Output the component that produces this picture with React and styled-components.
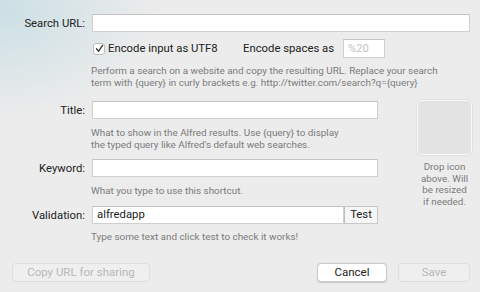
import React from "react";
import styled, { createGlobalStyle } from "styled-components";

const GlobalStyle = createGlobalStyle`
  html, body {
    margin: 0;
    padding: 0;
  }
  body {
    font-family: "Roboto", "Liberation Sans", sans-serif;
    -webkit-font-smoothing: antialiased;
  }
`;

const Window = styled.div`
  width: 480px;
  height: 292px;
  box-sizing: border-box;
  padding-top: 14px;
  background:
    radial-gradient(ellipse 160px 110px at 0 10px, rgba(200, 222, 228, 0.9), rgba(200, 222, 228, 0) 100%),
    #ececec;
  color: #222;
  display: flex;
  flex-direction: column;
  overflow: hidden;
`;

const Row = styled.div`
  display: flex;
  align-items: center;
  height: 18px;
  margin-top: ${(p) => p.$top || 0}px;
`;

const Label = styled.label`
  width: 85px;
  flex: none;
  text-align: right;
  font-size: 11.3px;
  color: #222;
  margin-right: 7px;
  white-space: nowrap;
`;

const TextInput = styled.div`
  box-sizing: border-box;
  height: ${(p) => p.$height || 18}px;
  width: ${(p) => (p.$width ? `${p.$width}px` : "auto")};
  flex: ${(p) => (p.$width ? "none" : "1")};
  margin-right: ${(p) => p.$right || 0}px;
  background: #fff;
  border: 1px solid #cfcfcf;
  border-top-color: #c4c4c4;
  font-size: 11.3px;
  line-height: ${(p) => (p.$height || 18) - 2}px;
  padding: 0 4px;
  color: ${(p) => (p.$placeholder ? "#c4c4c4" : "#1a1a1a")};
`;

const OptionRow = styled.div`
  display: flex;
  align-items: center;
  height: 19px;
  margin-top: 7px;
  padding-left: 93px;
`;

const CheckBox = styled.span`
  box-sizing: border-box;
  width: 12px;
  height: 12px;
  border: 1px solid #bdbdbd;
  border-radius: 3px;
  background: #fff;
  display: inline-flex;
  align-items: center;
  justify-content: center;
  margin-right: 3px;
`;

const OptionText = styled.span`
  width: ${(p) => p.$width}px;
  flex: none;
  font-size: 11.3px;
  color: #222;
  white-space: nowrap;
`;

const Help = styled.p`
  margin: ${(p) => p.$top || 6}px 0 0 91px;
  font-size: 9.9px;
  line-height: 12px;
  color: #7b7b7b;
  white-space: nowrap;
`;

const Body = styled.div`
  display: flex;
  margin-top: 12px;
`;

const Fields = styled.div`
  width: 378px;
  display: flex;
  flex-direction: column;
`;

const IconColumn = styled.div`
  margin-left: 39px;
  margin-top: -1px;
  width: 55px;
  display: flex;
  flex-direction: column;
  align-items: center;
`;

const IconWell = styled.div`
  box-sizing: border-box;
  width: 55px;
  height: 55px;
  border-radius: 4px;
  border: 1px solid #f8f8f8;
  background: #e3e3e3;
  box-shadow: 0 0 0 0.5px #d6d6d6;
`;

const IconHint = styled.p`
  margin: 6px 0 0;
  width: 70px;
  text-align: center;
  font-size: 9.8px;
  line-height: 11.7px;
  color: #7b7b7b;
`;

const TestButton = styled.div`
  box-sizing: border-box;
  width: 34px;
  height: 18px;
  border: 1px solid #c8c8c8;
  border-left-color: #bdbdbd;
  background: #f6f6f6;
  font-size: 11.3px;
  line-height: 16px;
  text-align: center;
  color: #222;
`;

const Footer = styled.div`
  margin-top: auto;
  margin-bottom: 10px;
  display: flex;
  align-items: center;
  padding: 0 10px 0 12px;
`;

const Button = styled.div`
  box-sizing: border-box;
  width: ${(p) => p.$width}px;
  height: 19px;
  margin-left: ${(p) => p.$left || 0}px;
  border-radius: 4px;
  font-size: 11.5px;
  line-height: 17px;
  text-align: center;
  white-space: nowrap;
  border: 1px solid ${(p) => (p.$disabled ? "#dedede" : "#c9c9c9")};
  background: ${(p) => (p.$disabled ? "#efefef" : "#fff")};
  color: ${(p) => (p.$disabled ? "#b8b8b8" : "#222")};
  box-shadow: ${(p) => (p.$disabled ? "none" : "0 0.5px 1px rgba(0,0,0,0.15)")};
`;

const Spacer = styled.div`
  flex: 1;
`;

function Check() {
  return (
    <svg width="9" height="9" viewBox="0 0 9 9">
      <path d="M1.5 4.8 L3.6 7.2 L7.6 1.4" fill="none" stroke="#333" strokeWidth="1.3" strokeLinecap="round" strokeLinejoin="round" />
    </svg>
  );
}

export default function App() {
  return (
    <Window>
      <GlobalStyle />
      <Row>
        <Label>Search URL:</Label>
        <TextInput $right={10} />
      </Row>
      <OptionRow>
        <CheckBox>
          <Check />
        </CheckBox>
        <OptionText $width={135}>Encode input as UTF8</OptionText>
        <OptionText $width={100}>Encode spaces as</OptionText>
        <TextInput $width={42} $height={19} $placeholder>%20</TextInput>
      </OptionRow>
      <Help $top={7}>
        Perform a search on a website and copy the resulting URL. Replace your search
        <br />
        term with {"{query}"} in curly brackets e.g. http://twitter.com/search?q={"{query}"}
      </Help>
      <Body>
        <Fields>
          <Row>
            <Label>Title:</Label>
            <TextInput />
          </Row>
          <Help $top={8}>
            What to show in the Alfred results. Use {"{query}"} to display
            <br />
            the typed query like Alfred's default web searches.
          </Help>
          <Row $top={8}>
            <Label>Keyword:</Label>
            <TextInput />
          </Row>
          <Help $top={8}>What you type to use this shortcut.</Help>
          <Row $top={9}>
            <Label>Validation:</Label>
            <TextInput>alfredapp</TextInput>
            <TestButton>Test</TestButton>
          </Row>
          <Help $top={7}>Type some text and click test to check it works!</Help>
        </Fields>
        <IconColumn>
          <IconWell />
          <IconHint>
            Drop icon
            <br />
            above. Will
            <br />
            be resized
            <br />
            if needed.
          </IconHint>
        </IconColumn>
      </Body>
      <Footer>
        <Button $width={138} $disabled>Copy URL for sharing</Button>
        <Spacer />
        <Button $width={70}>Cancel</Button>
        <Button $width={72} $left={11} $disabled>Save</Button>
      </Footer>
    </Window>
  );
}
